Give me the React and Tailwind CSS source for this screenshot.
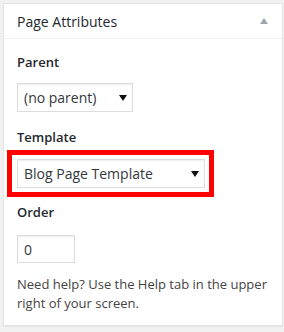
const FONT = { fontFamily: '"Open Sans", "Liberation Sans", sans-serif' }

function SelectBox({ value, width }) {
  return (
    <div
      className={`flex h-[29px] items-center justify-between border border-[#dddddd] bg-white pl-[6px] pr-[5px] text-[14px] text-[#32373c] shadow-[inset_0_1px_2px_rgba(0,0,0,0.07)] ${width}`}
    >
      <span>{value}</span>
      <svg width="8" height="6" viewBox="0 0 8 6" className="mt-[1px]">
        <path d="M0 0H8L4 6Z" fill="#111" />
      </svg>
    </div>
  )
}

export default function App() {
  return (
    <div className="h-[332px] w-[284px] bg-[#f1f1f1] pl-[3px] pt-[3px]" style={FONT}>
      <div className="w-[280px] border border-[#e5e5e5] bg-white shadow-[0_1px_1px_rgba(0,0,0,0.04)]">
        <div className="flex h-[35px] items-center justify-between border-b border-[#eeeeee] pl-[13px] pr-[14px]">
          <h2 className="text-[14px] leading-[19px] text-[#23282d]">Page Attributes</h2>
          <svg width="8" height="6" viewBox="0 0 8 6">
            <path d="M4 0L8 6H0Z" fill="#a0a5aa" />
          </svg>
        </div>

        <div className="px-[13px] pb-[12px] pt-[14px] text-[13px] text-[#444444]">
          <p className="font-semibold leading-[18px] text-[#23282d]">Parent</p>
          <div className="mt-[12px]">
            <SelectBox value="(no parent)" width="w-[116px]" />
          </div>

          <p className="mt-[16px] font-semibold leading-[18px] text-[#23282d]">Template</p>
          <div className="-ml-[10px] mt-[4px] w-[207px] border-[5px] border-[#ff0000] py-[4px] pl-[5px] pr-[4px]">
            <SelectBox value="Blog Page Template" width="w-[188px]" />
          </div>

          <p className="mt-[6px] font-semibold leading-[18px] text-[#23282d]">Order</p>
          <div className="mt-[14px] flex h-[28px] w-[58px] items-center border border-[#dddddd] pl-[6px] text-[14px] text-[#32373c] shadow-[inset_0_1px_2px_rgba(0,0,0,0.07)]">
            0
          </div>

          <p className="mt-[12px] leading-[19px]">
            Need help? Use the Help tab in the upper right of your screen.
          </p>
        </div>
      </div>
    </div>
  )
}
